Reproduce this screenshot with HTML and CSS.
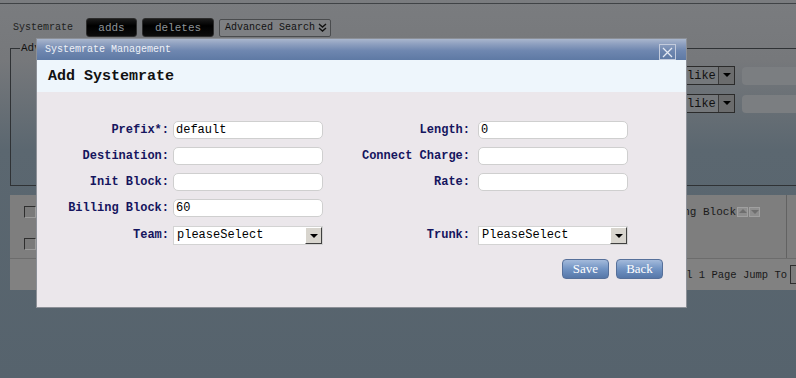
FILE: index.html
```html
<!DOCTYPE html>
<html lang="en">
<head>
  <meta charset="UTF-8" />
  <meta name="viewport" content="width=device-width, initial-scale=1.0"/>
  <title>Systemrate</title>
  <link rel="stylesheet" href="styles.css">
</head>
<body>
  <div class="page">
    <div class="topline"></div>

    <div class="toolbar">
      <span class="page-title">Systemrate</span>
      <button class="dark-btn">adds</button>
      <button class="dark-btn wide">deletes</button>
      <button class="search-toggle">Advanced Search
        <svg class="chev" width="9" height="9" viewBox="0 0 9 9"><path d="M1 1l3.5 3 3.5-3M1 5l3.5 3 3.5-3" fill="none" stroke="#111" stroke-width="1.4"/></svg>
      </button>
    </div>

    <fieldset class="search-box">
      <legend>Advanced Search</legend>
      <div class="search-rows">
        <div class="search-row">
          <div class="mini-select">like<span class="mini-arrow"></span></div>
          <div class="mini-input"></div>
        </div>
        <div class="search-row">
          <div class="mini-select">like<span class="mini-arrow"></span></div>
          <div class="mini-input"></div>
        </div>
      </div>
    </fieldset>

    <div class="grid">
      <div class="grid-row head">
        <div class="cell-check"><span class="check"></span></div>
        <div class="cell-main">Billing Block<span class="sort"><i class="up"></i><i class="down"></i></span></div>
        <div class="cell-last">Trunk</div>
      </div>
      <div class="grid-row body-row">
        <div class="cell-check"><span class="check"></span></div>
        <div class="cell-main"></div>
        <div class="cell-last">default</div>
      </div>
      <div class="pager">
        <span class="pager-text">Total 1 Page Jump To</span>
        <span class="jump"></span>
      </div>
    </div>
  </div>

  <!-- модальное окно -->
  <div class="modal">
    <div class="modal-bar">
      <span class="modal-caption">Systemrate Management</span>
      <button class="close-btn">
        <svg width="11" height="11" viewBox="0 0 11 11"><path d="M1 1l9 9M10 1l-9 9" stroke="#e4e9f3" stroke-width="1.3"/></svg>
      </button>
    </div>
    <div class="modal-head">Add Systemrate</div>

    <div class="modal-body">
      <div class="form-row">
        <label class="lbl">Prefix*:</label>
        <input class="field" type="text" value="default" />
        <label class="lbl lbl-right">Length:</label>
        <input class="field" type="text" value="0" />
      </div>
      <div class="form-row">
        <label class="lbl">Destination:</label>
        <input class="field" type="text" />
        <label class="lbl lbl-right">Connect Charge:</label>
        <input class="field" type="text" />
      </div>
      <div class="form-row">
        <label class="lbl">Init Block:</label>
        <input class="field" type="text" />
        <label class="lbl lbl-right">Rate:</label>
        <input class="field" type="text" />
      </div>
      <div class="form-row">
        <label class="lbl">Billing Block:</label>
        <input class="field" type="text" value="60" />
      </div>
      <div class="form-row select-row">
        <label class="lbl">Team:</label>
        <div class="select-box"><span class="select-text">pleaseSelect</span><span class="select-arrow"></span></div>
        <label class="lbl lbl-right">Trunk:</label>
        <div class="select-box"><span class="select-text">PleaseSelect</span><span class="select-arrow"></span></div>
      </div>

      <div class="form-actions">
        <button class="blue-btn">Save</button>
        <button class="blue-btn">Back</button>
      </div>
    </div>
  </div>
</body>
</html>
```

FILE: styles.css
```css
* {
  box-sizing: border-box;
}

body {
  margin: 0;
  width: 796px;
  height: 378px;
  overflow: hidden;
  position: relative;
  font-family: "Liberation Mono", "DejaVu Sans Mono", monospace;
  background: linear-gradient(#7a7c7f 0, #76787b 60px, #5b6770 150px, #56636d 378px);
}

/* страница под оверлеем */
.topline {
  height: 4px;
  border-bottom: 1px solid #404346;
}

.toolbar {
  display: flex;
  align-items: center;
  height: 19px;
  margin-top: 14px;
  padding-left: 13px;
}

.page-title {
  width: 73px;
  font-size: 10px;
  color: #1e1f20;
}

.dark-btn {
  width: 51px;
  height: 19px;
  margin-right: 5px;
  padding: 0;
  background: linear-gradient(#1a1a1a, #000 40%, #0c0c0c);
  border: 1px solid #2c2c2c;
  border-radius: 3px;
  color: #8d9397;
  font-family: "Liberation Mono", monospace;
  font-size: 11px;
}

.dark-btn.wide {
  width: 72px;
}

.search-toggle {
  display: flex;
  align-items: center;
  gap: 3px;
  width: 112px;
  height: 18px;
  padding: 0 0 0 5px;
  background: #7e8083;
  border: 1px solid #4a4c4e;
  border-radius: 2px;
  color: #111;
  font-family: "Liberation Mono", monospace;
  font-size: 10px;
}

.search-box {
  width: 830px;
  height: 144px;
  margin: 5px 0 0 10px;
  padding: 0;
  border: 1px solid #2f3235;
}

.search-box legend {
  margin-left: 9px;
  padding: 0 1px;
  font-size: 11px;
  color: #111;
}

.search-rows {
  padding: 12px 0 0 672px;
}

.search-row {
  display: flex;
  align-items: center;
  gap: 7px;
  margin-bottom: 9px;
}

.mini-select {
  display: flex;
  align-items: center;
  justify-content: space-between;
  width: 52px;
  height: 19px;
  padding-left: 3px;
  background: #75787b;
  border: 1px solid #2b2b2b;
  font-size: 12px;
  color: #111;
}

.mini-arrow {
  width: 16px;
  height: 17px;
  background: #6b6c6d;
  border-left: 1px solid #3b3b3b;
  position: relative;
}

.mini-arrow::after,
.select-arrow::after {
  content: "";
  position: absolute;
  left: 4px;
  top: 6px;
  border-left: 4px solid transparent;
  border-right: 4px solid transparent;
  border-top: 4px solid #000;
}

.mini-input {
  width: 60px;
  height: 18px;
  background: #7b7e81;
  border-radius: 4px;
}

.grid {
  width: 820px;
  margin: 9px 0 0 10px;
  background: #7e7e7e;
  font-size: 11px;
  color: #1a1a1a;
}

.grid-row {
  display: flex;
  align-items: stretch;
}

.grid-row.head {
  height: 34px;
}

.grid-row.body-row {
  height: 29px;
}

.cell-check {
  width: 40px;
  display: flex;
  align-items: center;
  padding-left: 14px;
}

.check {
  width: 12px;
  height: 12px;
  border: 1px solid #2e2e2e;
  border-right-color: #9a9a9a;
  border-bottom-color: #9a9a9a;
  background: #7a7a7a;
}

.cell-main {
  flex: 1;
  display: flex;
  align-items: center;
  justify-content: flex-end;
  padding-right: 26px;
}

.sort {
  display: flex;
  gap: 1px;
  margin-left: 1px;
}

.sort i {
  width: 11px;
  height: 10px;
  background: #8e8e8e;
  border: 1px solid #a0a0a0;
  position: relative;
}

.sort i::after {
  content: "";
  position: absolute;
  left: 1px;
  border-left: 4px solid transparent;
  border-right: 4px solid transparent;
}

.sort .up::after {
  top: 1px;
  border-bottom: 4px solid #6e6e6e;
}

.sort .down::after {
  top: 2px;
  border-top: 4px solid #6e6e6e;
}

.cell-last {
  width: 44px;
  display: flex;
  align-items: center;
  padding-left: 11px;
  border-left: 1px solid #626262;
}

.pager {
  display: flex;
  align-items: center;
  height: 32px;
  border-top: 1px solid #6c6c6c;
  background: #818181;
  font-size: 10.5px;
}

.pager-text {
  margin-left: 651px;
}

.jump {
  width: 20px;
  height: 19px;
  margin-left: 3px;
  border: 1px solid #2e2e2e;
  background: #7c7c7c;
}

/* модальное окно */
.modal {
  position: absolute;
  left: 36px;
  top: 38px;
  width: 651px;
  height: 270px;
  border: 1px solid #8c9097;
  background: #ebe7eb;
}

.modal-bar {
  display: flex;
  align-items: center;
  justify-content: space-between;
  height: 21px;
  padding: 0 10px 0 8px;
  background: linear-gradient(#a9b6cd 0, #8d9fbf 25%, #6f87b0 55%, #5e79a4 100%);
}

.modal-caption {
  font-size: 10px;
  color: #eef1f7;
}

.close-btn {
  display: flex;
  align-items: center;
  justify-content: center;
  width: 17px;
  height: 16px;
  margin-top: 5px;
  padding: 0;
  background: transparent;
  border: 1px solid #c3cbdc;
}

.modal-head {
  height: 32px;
  padding-left: 11px;
  line-height: 33px;
  background: #eef6fc;
  font-size: 15px;
  font-weight: bold;
  color: #111;
}

.modal-body {
  padding-top: 25px;
}

.form-row {
  display: flex;
  align-items: center;
  height: 26px;
}

.form-row.select-row {
  margin-top: 1px;
}

.lbl {
  width: 132px;
  margin-right: 4px;
  text-align: right;
  font-size: 12px;
  font-weight: bold;
  color: #15155e;
}

.lbl-right {
  width: 147px;
  margin-right: 8px;
}

.field {
  width: 150px;
  height: 18px;
  padding: 0 2px;
  background: #fff;
  border: 1px solid #cfcfcf;
  border-radius: 5px;
  font-family: "Liberation Mono", monospace;
  font-size: 12px;
  color: #000;
  outline: none;
}

.select-box {
  display: flex;
  align-items: center;
  justify-content: space-between;
  width: 150px;
  height: 19px;
  padding-left: 3px;
  background: #fff;
  border: 1px solid #d3d3d3;
}

.select-text {
  font-size: 12px;
  color: #000;
}

.select-arrow {
  position: relative;
  width: 17px;
  height: 17px;
  background: #d8d5ce;
  border: 1px solid;
  border-color: #fff #404040 #404040 #fff;
}

.form-actions {
  display: flex;
  justify-content: flex-end;
  gap: 7px;
  margin-top: 11px;
  padding-right: 23px;
}

.blue-btn {
  width: 47px;
  height: 20px;
  padding: 0;
  background: linear-gradient(#a3badb, #7193c3 50%, #5677a8);
  border: 1px solid #56709a;
  border-radius: 4px;
  color: #fff;
  font-family: "Liberation Serif", serif;
  font-size: 13px;
}
```
